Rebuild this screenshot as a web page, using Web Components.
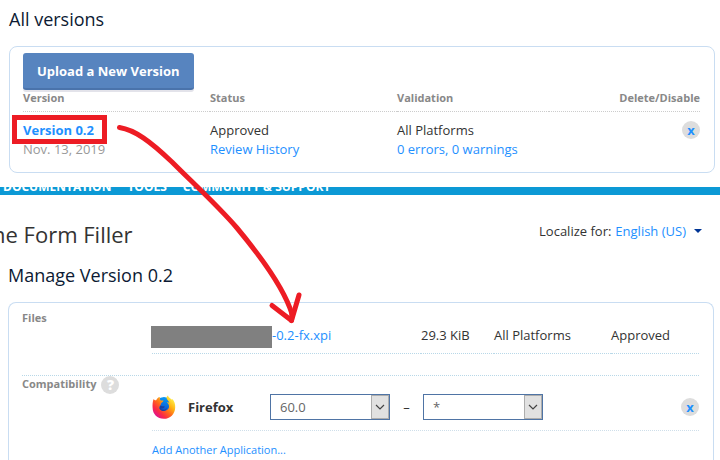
<!DOCTYPE html>
<html lang="en">
<head>
<meta charset="utf-8">
<title>Manage Version 0.2</title>
<style>
    html, body {
        margin: 0;
        background: #fff;
    }
    body {
        font-family: "Open Sans", "Noto Sans", sans-serif;
        font-size: 13px;
        line-height: 19px;
        color: #333;
    }
</style>
</head>
<body>
<versions-page></versions-page>

<script>
class PageCard extends HTMLElement{
    constructor(){
        super();

        this.attachShadow({ mode: 'open' });
        this.shadowRoot.innerHTML = `
        <style>
        :host{
            display: block;
            box-sizing: border-box;
            border: 1px solid #c9ddf2;
            border-radius: 8px;
            padding: 6px 14px 13px 13px;
        }
        :host([open-end]){
            border-bottom: none;
            border-radius: 8px 8px 0 0;
            padding: 0 14px 0 13px;
        }
        </style>
        <slot></slot>
        `
    }
}
customElements.define('page-card', PageCard);

class RemoveButton extends HTMLElement{
    constructor(){
        super();

        this.attachShadow({ mode: 'open' });
        this.shadowRoot.innerHTML = `
        <style>
        :host{
            display: block;
            width: 18px;
            height: 18px;
        }
        button{
            display: block;
            width: 18px;
            height: 18px;
            padding: 0;
            border: none;
            border-radius: 50%;
            background: #ddd;
            color: #1e90ff;
            font: bold 13px/16px "Open Sans", sans-serif;
            text-align: center;
            cursor: pointer;
        }
        </style>
        <button type="button" aria-label="${this.getAttribute('label') || 'Delete'}">x</button>
        `
    }
}
customElements.define('remove-button', RemoveButton);

class VersionSelect extends HTMLElement{
    constructor(){
        super();

        const value = this.getAttribute('value');
        this.attachShadow({ mode: 'open' });
        this.shadowRoot.innerHTML = `
        <style>
        :host{
            display: grid;
            grid-template-columns: 1fr 18px;
            box-sizing: border-box;
            width: 120px;
            height: 26px;
            border: 1px solid #4f74a5;
        }
        select{
            grid-area: 1 / 1 / 2 / 3;
            appearance: none;
            border: none;
            border-radius: 0;
            background: #fff;
            padding: 0 9px;
            margin: 0;
            font: 13px/24px "Open Sans", sans-serif;
            color: #666;
        }
        svg{
            grid-area: 1 / 2 / 2 / 3;
            box-sizing: border-box;
            width: 18px;
            height: 24px;
            border: 1px solid #adadad;
            background: #e1e1e1;
            pointer-events: none;
        }
        </style>
        <select aria-label="${this.getAttribute('label')}">
            <option>${value}</option>
        </select>
        <svg viewBox="0 0 16 22" aria-hidden="true">
            <path d="M4 9 L8 13 L12 9" fill="none" stroke="#444" stroke-width="1.2"/>
        </svg>
        `
    }
}
customElements.define('version-select', VersionSelect);

class FirefoxIcon extends HTMLElement{
    constructor(){
        super();

        this.attachShadow({ mode: 'open' });
        this.shadowRoot.innerHTML = `
        <style>
        :host{
            display: block;
            width: 24px;
            height: 24px;
        }
        svg{ display: block; }
        </style>
        <svg width="24" height="24" viewBox="0 0 24 24" aria-hidden="true">
            <defs>
                <linearGradient id="fox" x1="0.85" y1="0.1" x2="0.15" y2="0.85">
                    <stop offset="0" stop-color="#fff14a"/>
                    <stop offset="0.3" stop-color="#ffb413"/>
                    <stop offset="0.55" stop-color="#ff6a1c"/>
                    <stop offset="0.8" stop-color="#fb2c44"/>
                    <stop offset="1" stop-color="#e31587"/>
                </linearGradient>
                <linearGradient id="globe" x1="0.6" y1="0" x2="0.4" y2="1">
                    <stop offset="0" stop-color="#0a9cf5"/>
                    <stop offset="0.6" stop-color="#0a62d8"/>
                    <stop offset="1" stop-color="#2a2f8f"/>
                </linearGradient>
            </defs>
            <circle cx="12" cy="11" r="9" fill="url(#globe)"/>
            <path fill="url(#fox)" d="M1.6 4 C2.4 5.2 3.2 5.4 4.2 5.2 C5 3.2 6.4 2.2 7.8 2 C7.6 3.4 7.8 4.6 9 5.4 L11.4 5.6 C11.4 6.8 10 7.4 9.2 8.2 C8.8 9.2 9 9.8 8.4 10.4 C7.2 11.2 7 12.6 8.4 14.2 C10.4 16.6 13.6 16.4 15.6 14.6 C17.8 12.4 17.4 9.2 15 7.4 C16.2 7.2 17 7.8 17.4 8.4 C17 5.6 15 4.8 14.6 3.4 C14.4 2 15 0.8 16 0.4 C16.2 2.2 18.4 3 20 4.8 L20.4 4 C22.4 6 23.4 9 23.2 12.4 C23 19 18.2 23.8 11.8 23.8 C5.4 23.8 0.6 19.2 0.6 12.8 C0.4 9.6 0.6 6.6 1.6 4 Z"/>
            <path fill="#1b3f9f" d="M8.4 10.6 C9.6 11.8 11 11.2 12.8 11.6 C12.4 13 10.4 14 8.6 13.4 C10.6 15.8 14 15 15 12.4 C14 16.6 9.2 17.2 7.4 13.6 Z"/>
        </svg>
        `
    }
}
customElements.define('firefox-icon', FirefoxIcon);

class VersionsTable extends HTMLElement{
    constructor(){
        super();

        this.attachShadow({ mode: 'open' });
        this.shadowRoot.innerHTML = `
        <style>
        :host{ display: block; }
        .upload{
            display: block;
            height: 37px;
            padding: 0 14px;
            border: none;
            border-bottom: 2px solid #4a73ab;
            border-radius: 3px;
            background: #5784bf;
            box-shadow: 0 2px 0 #e3e3ea;
            color: #fff;
            font: bold 13px/34px "Open Sans", sans-serif;
            cursor: pointer;
        }
        table{
            width: 100%;
            border-collapse: collapse;
            table-layout: fixed;
        }
        th, td{
            padding: 0;
            text-align: left;
            vertical-align: top;
        }
        th{
            height: 21px;
            border-bottom: 1px dotted #ccc;
            font-size: 11px;
            line-height: 16px;
            color: #888;
        }
        td{ padding-top: 9px; }
        .side{ width: 187px; }
        .end{ text-align: right; }
        td remove-button{ margin-left: auto; }
        a{
            color: #1e90ff;
            text-decoration: none;
        }
        .date{ color: #999; }
        </style>
        <button class="upload" type="button">Upload a New Version</button>
        <table>
            <thead>
                <tr>
                    <th class="side">Version</th>
                    <th class="side">Status</th>
                    <th>Validation</th>
                    <th class="end">Delete/Disable</th>
                </tr>
            </thead>
            <tbody>
                <tr>
                    <td><a href="#"><b>Version 0.2</b></a><br><span class="date">Nov. 13, 2019</span></td>
                    <td>Approved<br><a href="#">Review History</a></td>
                    <td>All Platforms<br><a href="#">0 errors, 0 warnings</a></td>
                    <td><remove-button label="Delete version"></remove-button></td>
                </tr>
            </tbody>
        </table>
        `
    }
}
customElements.define('versions-table', VersionsTable);

class SiteNav extends HTMLElement{
    constructor(){
        super();

        this.attachShadow({ mode: 'open' });
        this.shadowRoot.innerHTML = `
        <style>
        :host{ display: block; }
        /* only the lower edge of the bar is left showing */
        nav{
            display: flex;
            align-items: flex-end;
            gap: 16px;
            height: 8px;
            padding-left: 3px;
            overflow: hidden;
            background: #0c99d5;
        }
        a{
            color: #fff;
            font-size: 12px;
            line-height: 16px;
            font-weight: bold;
            text-decoration: none;
            white-space: nowrap;
        }
        </style>
        <nav>
            <a href="#">DOCUMENTATION</a>
            <a href="#">TOOLS</a>
            <a href="#">COMMUNITY &amp; SUPPORT</a>
        </nav>
        `
    }
}
customElements.define('site-nav', SiteNav);

class LocalePicker extends HTMLElement{
    constructor(){
        super();

        this.attachShadow({ mode: 'open' });
        this.shadowRoot.innerHTML = `
        <style>
        :host{
            display: flex;
            align-items: center;
            gap: 4px;
            white-space: nowrap;
        }
        a{
            display: flex;
            align-items: center;
            gap: 8px;
            color: #1e90ff;
            text-decoration: none;
        }
        </style>
        <span>Localize for:</span>
        <a href="#">English (US)
            <svg width="8" height="4" viewBox="0 0 8 4" aria-hidden="true"><path d="M0 0 H8 L4 4 Z" fill="#003595"/></svg>
        </a>
        `
    }
}
customElements.define('locale-picker', LocalePicker);

class VersionDetails extends HTMLElement{
    constructor(){
        super();

        this.attachShadow({ mode: 'open' });
        this.shadowRoot.innerHTML = `
        <style>
        :host{ display: block; }
        .row{
            display: grid;
            grid-template-columns: 130px 1fr;
        }
        .row + .row{ border-top: 1px dotted #b8d8e8; }
        h3{
            display: flex;
            align-items: flex-start;
            gap: 5px;
            height: 18px;
            margin: 0;
            font-size: 11px;
            line-height: 16px;
            color: #888;
        }
        .files h3{ margin-top: 7px; }
        .help{
            width: 18px;
            height: 18px;
            padding: 0;
            border: none;
            border-radius: 50%;
            background: #ddd;
            color: #fff;
            font: 800 14px/18px "Open Sans", sans-serif;
        }
        a{
            color: #1e90ff;
            text-decoration: none;
        }
        table{
            width: 100%;
            margin: 23px 0 21px;
            border-collapse: collapse;
            table-layout: fixed;
            border-bottom: 1px dotted #b8d8e8;
        }
        td{
            height: 27px;
            padding: 0;
            vertical-align: top;
        }
        td:nth-child(1){ width: 269px; }
        td:nth-child(2){ width: 73px; }
        td:nth-child(3){ width: 117px; }
        .name{
            display: flex;
            margin-left: -1px;
        }
        .hidden-name{
            width: 121px;
            height: 22px;
            background: #808080;
        }
        .app{
            display: flex;
            align-items: center;
            height: 36px;
            padding: 13px 0 5px;
            border-bottom: 1px dotted #cfdfea;
        }
        .app b{
            width: 82px;
            margin-left: 12px;
        }
        .dash{
            width: 33px;
            text-align: center;
        }
        .app remove-button{ margin-left: auto; }
        .add{
            display: block;
            padding-top: 9px;
            font-size: 11px;
        }
        </style>
        <section class="row files">
            <h3>Files</h3>
            <table>
                <tr>
                    <td><div class="name"><span class="hidden-name"></span><a href="#">-0.2-fx.xpi</a></div></td>
                    <td>29.3 KiB</td>
                    <td>All Platforms</td>
                    <td>Approved</td>
                </tr>
            </table>
        </section>
        <section class="row">
            <h3>Compatibility <button class="help" type="button" aria-label="Compatibility help">?</button></h3>
            <div>
                <div class="app">
                    <firefox-icon></firefox-icon>
                    <b>Firefox</b>
                    <version-select label="Minimum version" value="60.0"></version-select>
                    <span class="dash">–</span>
                    <version-select label="Maximum version" value="*"></version-select>
                    <remove-button label="Remove Firefox"></remove-button>
                </div>
                <a class="add" href="#">Add Another Application...</a>
            </div>
        </section>
        `
    }
}
customElements.define('version-details', VersionDetails);

// red pen marks lying over both parts of the page
class PenMarks extends HTMLElement{
    constructor(){
        super();

        this.attachShadow({ mode: 'open' });
        this.shadowRoot.innerHTML = `
        <style>
        :host{
            position: absolute;
            top: 0;
            left: 0;
            pointer-events: none;
        }
        svg{ display: block; }
        </style>
        <svg width="320" height="340" viewBox="0 0 320 340" fill="none" stroke="#ed1c24" stroke-width="5" aria-hidden="true">
            <rect x="14.5" y="117.5" width="90" height="24"/>
            <g stroke-linecap="round" stroke-linejoin="round">
                <path d="M119.5 127.5 C135 130 150 141 172 162 C195 185 218 206 237 228 C262 258 284 288 292 314"/>
                <path d="M272 305.5 L291.500 320.5 L299 295"/>
                <path d="M291.500 320.5 L292 312"/>
            </g>
        </svg>
        `
    }
}
customElements.define('pen-marks', PenMarks);

class VersionsPage extends HTMLElement{
    constructor(){
        super();

        this.attachShadow({ mode: 'open' });
        this.shadowRoot.innerHTML = `
        <style>
        :host{
            display: flex;
            flex-direction: column;
            position: relative;
            min-height: 100vh;
            overflow: hidden;
        }
        h1, h2{
            margin: 0;
            font-weight: normal;
        }
        h2{
            padding-left: 8px;
            font-size: 18px;
            line-height: 26px;
            color: #0c1a33;
        }
        .list{ padding: 6px 5px 14px 9px; }
        .list h2{
            padding-left: 0;
            margin-bottom: 14px;
        }
        .title{
            display: flex;
            justify-content: space-between;
            align-items: center;
            padding: 23px 18px 12px 0;
        }
        /* the add-on name runs out of the left edge */
        h1{
            margin-left: -8px;
            font-size: 22px;
            line-height: 32px;
        }
        locale-picker{ margin-bottom: 6px; }
        .details{
            flex: 1;
            margin: 14px 6px 0 8px;
        }
        </style>
        <section class="list">
            <h2>All versions</h2>
            <page-card><versions-table></versions-table></page-card>
        </section>
        <site-nav></site-nav>
        <header class="title">
            <h1>ne Form Filler</h1>
            <locale-picker></locale-picker>
        </header>
        <h2>Manage Version 0.2</h2>
        <page-card class="details" open-end><version-details></version-details></page-card>
        <pen-marks></pen-marks>
        `
    }
}
customElements.define('versions-page', VersionsPage);
</script>
</body>
</html>
